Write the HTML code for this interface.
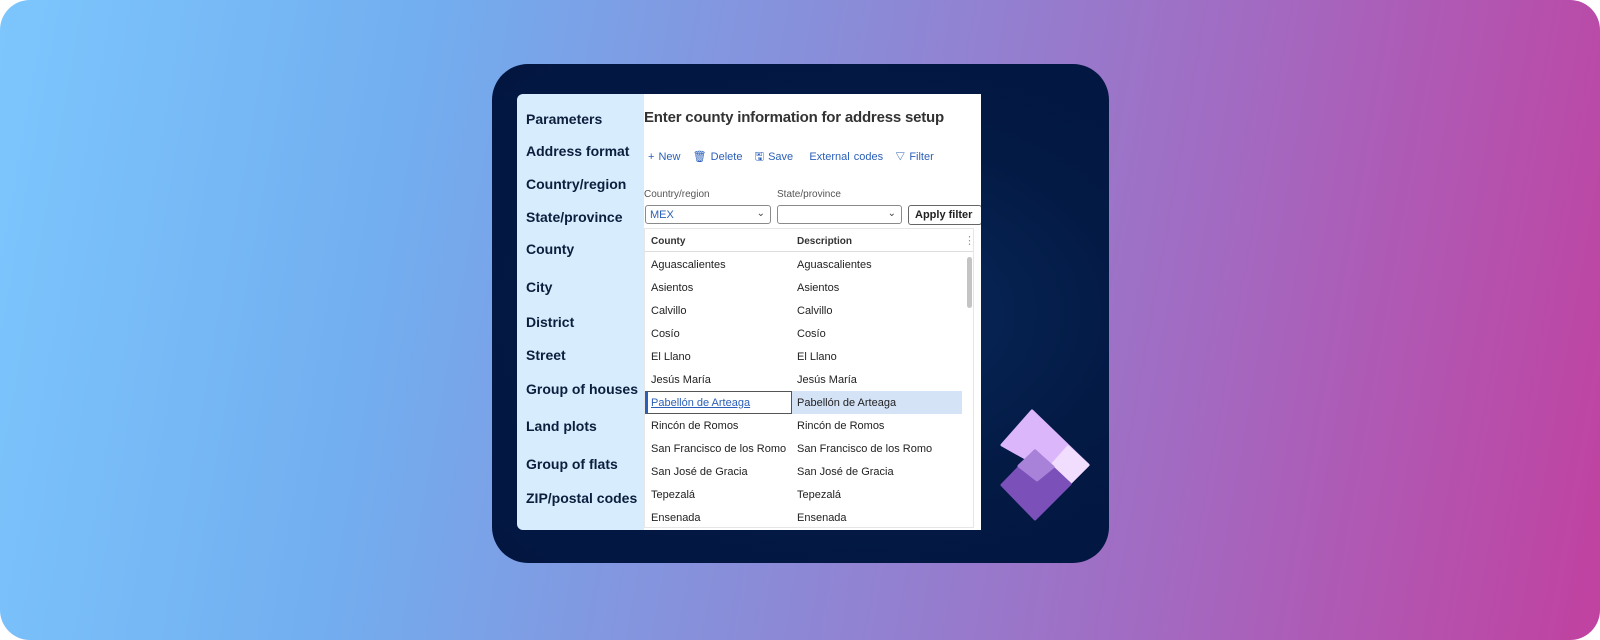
<!DOCTYPE html>
<html><head><meta charset="utf-8"><style>
*{margin:0;padding:0;box-sizing:border-box}
body{width:1600px;height:640px;background:#fff;font-family:"Liberation Sans",sans-serif;overflow:hidden}
.bg{position:absolute;left:0;top:0;width:1600px;height:640px;border-radius:30px;background:linear-gradient(100deg,#7cc6fd 0%,#72aef0 25%,#8a8cd8 50%,#a468c0 75%,#c141a0 100%)}
.panel{position:absolute;left:492px;top:64px;width:617px;height:499px;border-radius:36px;background:radial-gradient(ellipse at 60% 50%,#0a2a5c 0%,#031a45 50%,#021640 100%)}
.side{position:absolute;left:517px;top:94px;width:128px;height:436px;background:#d7ecfd;border-radius:6px 0 0 6px}
.side div{position:absolute;left:9px;font-size:14px;font-weight:bold;color:#0c1e3c;white-space:nowrap}
.main{position:absolute;left:644px;top:94px;width:337px;height:436px;background:#fff;overflow:hidden}
.t{position:absolute;white-space:nowrap}
.dd{position:absolute;top:111px;height:19px;border:1px solid #8a8a8a;border-radius:3px;background:#fff}
.dd span.c{position:absolute;right:5px;top:2px;font-size:10px;color:#444}
.row{position:absolute;font-size:11px;color:#222;white-space:nowrap}
</style></head><body>
<div class="bg"></div>
<div class="panel"></div>
<div class="side">
<div style="top:17px">Parameters</div>
<div style="top:49px">Address format</div>
<div style="top:82px">Country/region</div>
<div style="top:115px">State/province</div>
<div style="top:147px">County</div>
<div style="top:185px">City</div>
<div style="top:220px">District</div>
<div style="top:253px">Street</div>
<div style="top:287px">Group of houses</div>
<div style="top:324px">Land plots</div>
<div style="top:362px">Group of flats</div>
<div style="top:396px">ZIP/postal codes</div>
</div>
<div class="main">
<div class="t" style="left:0;top:15px;font-size:15px;font-weight:bold;color:#333;letter-spacing:-0.2px">Enter county information for address setup</div>
<div class="t" style="left:4px;top:54px;font-size:11px;color:#2b5fb8;word-spacing:1px">+ New &nbsp; &#x1F5D1;&#xFE0E; Delete &nbsp; &#x1F5AB;&#xFE0E; Save &nbsp;&nbsp; External codes &nbsp; &#x25BD; Filter</div>
<div class="t" style="left:0;top:95px;font-size:10px;color:#555">Country/region</div>
<div class="t" style="left:133px;top:95px;font-size:10px;color:#555">State/province</div>
<div class="dd" style="left:1px;width:126px"><span class="t" style="left:4px;top:3px;font-size:11px;color:#2b5fb8">MEX</span><span class="c">&#8964;</span></div>
<div class="dd" style="left:133px;width:125px"><span class="c">&#8964;</span></div>
<div class="dd" style="left:264px;width:74px;height:20px;border-color:#666"><span class="t" style="left:6px;top:3px;font-size:11px;font-weight:bold;color:#222">Apply filter</span></div>
<div style="position:absolute;left:0;top:134px;width:330px;height:300px;border:1px solid #e6e6e6"></div>
<div class="row" style="left:7px;top:142px;font-size:10px;font-weight:bold;color:#333">County</div>
<div class="row" style="left:153px;top:142px;font-size:10px;font-weight:bold;color:#333">Description</div>
<div class="row" style="left:320px;top:140px;color:#999">&#8942;</div>
<div style="position:absolute;left:1px;top:157px;width:328px;height:1px;background:#ddd"></div>
<div style="position:absolute;left:148px;top:297px;width:170px;height:23px;background:#d5e3f7"></div>
<div style="position:absolute;left:1px;top:297px;width:147px;height:23px;border:1px solid #555;border-left:3px solid #2b5fb8"></div>
<div style="position:absolute;left:323px;top:163px;width:5px;height:51px;border-radius:3px;background:#c4c4c4"></div>
<div id="rows"></div>
</div>
<svg style="position:absolute;left:0;top:0" width="1600" height="640">
<g stroke-linejoin="round" stroke-width="3">
<polygon points="1032,411 1088,465 1070,483 1002,445" fill="#dcb6fa" stroke="#dcb6fa"/>
<polygon points="1068,447 1088,465 1070,483 1052,465" fill="#f1ddfe" stroke="#f1ddfe"/>
<polygon points="1035,451 1070,484 1035,519 1002,485" fill="#7b50b9" stroke="#7b50b9"/>
<polygon points="1035,451 1053,467 1037,480 1019,466" fill="#a882d8" stroke="#a882d8"/>
</g>
</svg>
<script>
var n=["Aguascalientes","Asientos","Calvillo","Cosío","El Llano","Jesús María","Pabellón de Arteaga","Rincón de Romos","San Francisco de los Romo","San José de Gracia","Tepezalá","Ensenada"];
var h="";n.forEach(function(s,i){var y=165+i*23;var c1=i==6?'color:#2b5fb8;text-decoration:underline':'';
h+='<div class="row" style="left:7px;top:'+y+'px;'+c1+'">'+s+'</div><div class="row" style="left:153px;top:'+y+'px">'+s+'</div>';});
document.getElementById("rows").outerHTML=h;
</script>
</body></html>
